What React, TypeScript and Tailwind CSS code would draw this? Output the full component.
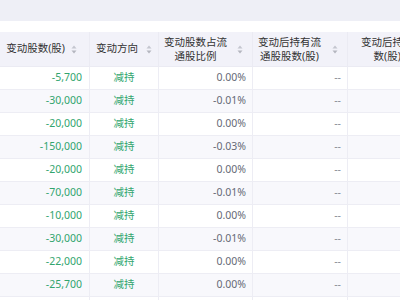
import React from "react";

const rows = [
  ["-5,700", "0.00%"],
  ["-30,000", "-0.01%"],
  ["-20,000", "0.00%"],
  ["-150,000", "-0.03%"],
  ["-20,000", "0.00%"],
  ["-70,000", "-0.01%"],
  ["-10,000", "0.00%"],
  ["-30,000", "-0.01%"],
  ["-22,000", "0.00%"],
  ["-25,700", "0.00%"],
  ["-18,000", "0.00%"],
];

function Sort() {
  return (
    <svg width="6" height="9" viewBox="0 0 6 9" className="shrink-0">
      <path d="M3 0.5 L5.5 3.5 L0.5 3.5 Z" fill="#c4c6cf" />
      <path d="M3 8.5 L5.5 5.5 L0.5 5.5 Z" fill="#b4b6bf" />
    </svg>
  );
}

const cols = "grid grid-cols-[90px_69px_94px_95px_120px]";

export default function App() {
  return (
    <div
      className="w-[400px] h-[300px] overflow-hidden bg-white text-[10.5px]"
      style={{ fontFamily: '"Noto Sans", "Noto Sans CJK SC", sans-serif' }}
    >
      <div className="h-[21px] bg-[#eeeff6]" />
      <div className="h-[11px] bg-white" />
      <div className="w-[468px]">
        <div className={`${cols} h-[35px] bg-[#f2f2f9] border-b border-[#ebebf3] text-[#333]`}>
          <div className="flex items-center justify-end gap-[6px] pr-[12px] border-r border-[#ebebf3]">
            <span>变动股数(股)</span>
            <Sort />
          </div>
          <div className="flex items-center justify-center gap-[8px] border-r border-[#ebebf3]">
            <span>变动方向</span>
            <Sort />
          </div>
          <div className="flex items-center justify-end gap-[10px] pr-[9px] border-r border-[#ebebf3]">
            <span className="text-center leading-[14px]">
              变动股数占流
              <br />
              通股比例
            </span>
            <Sort />
          </div>
          <div className="flex items-center justify-end gap-[11px] pr-[9px] border-r border-[#ebebf3]">
            <span className="text-center leading-[14px]">
              变动后持有流
              <br />
              通股股数(股)
            </span>
            <Sort />
          </div>
          <div className="flex items-center pl-[13px]">
            <span className="text-center leading-[14px]">
              变动后持股
              <br />
              数(股)
            </span>
          </div>
        </div>
        {rows.map((r, i) => (
          <div
            key={i}
            className={`${cols} h-[23px] border-b border-[#ededf4] ${i % 2 === 1 ? "bg-[#f8f8fc]" : "bg-white"}`}
          >
            <div className="flex items-center justify-end pr-[7px] text-[#32a56e] border-r border-[#ededf4]">
              {r[0]}
            </div>
            <div className="flex items-center justify-center text-[#32a56e] border-r border-[#ededf4]">
              减持
            </div>
            <div className="flex items-center justify-end pr-[6px] text-[#666a75] border-r border-[#ededf4]">
              {r[1]}
            </div>
            <div className="flex items-center justify-end pr-[6px] text-[#8a8d96] border-r border-[#ededf4]">
              --
            </div>
            <div />
          </div>
        ))}
      </div>
    </div>
  );
}
